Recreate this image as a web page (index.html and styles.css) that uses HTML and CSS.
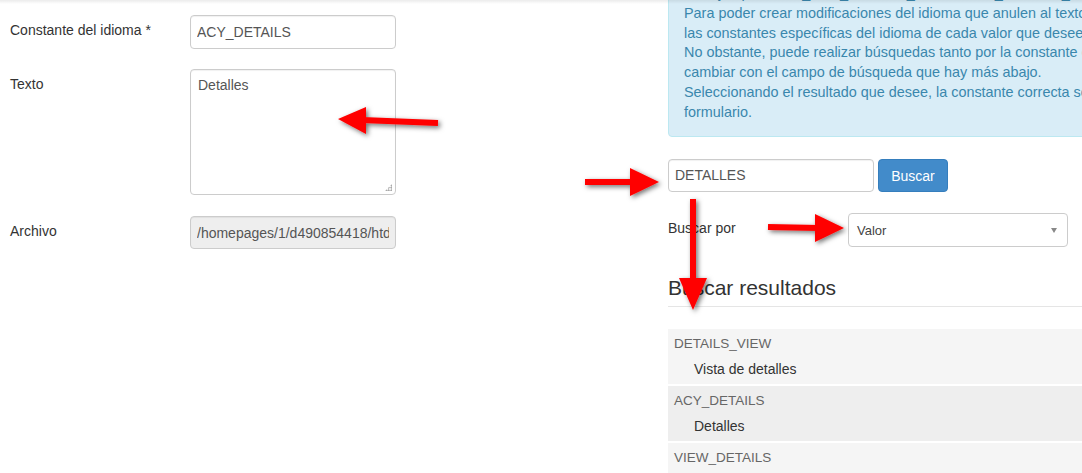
FILE: index.html
```html
<!DOCTYPE html>
<html lang="es">
<head>
  <meta charset="UTF-8">
  <title>Idioma - Modificar constante</title>
  <meta name="viewport" content="width=device-width,initial-scale=1">
  <link rel="stylesheet" href="styles.css">
</head>
<body>

<div class="page">
  <div class="form-col">
    <div class="form-row">
      <label for="constant">Constante del idioma *</label>
      <input id="constant" class="field" value="ACY_DETAILS">
    </div>
    <div class="form-row">
      <label for="text">Texto</label>
      <div class="textarea-wrap">
        <textarea id="text" class="field">Detalles</textarea>
      </div>
    </div>
    <div class="form-row">
      <label for="file">Archivo</label>
      <input id="file" class="field field-short" value="/homepages/1/d490854418/htdocs/language/es-ES/es-ES.com_acymailing.ini" readonly>
    </div>
  </div>

  <div class="side-col">
    <div class="alert">
      Por ejemplo: COM_ACY_DETAILS_EMAIL, ACY_DETAILS_VIEW, ACY_VIEW_DETAILS y ACY_EMAIL_PAGE_QUEUE<br>
      Para poder crear modificaciones del idioma que anulen al texto original, necesita conocer<br>
      las constantes específicas del idioma de cada valor que desee modificar.<br>
      No obstante, puede realizar búsquedas tanto por la constante como por el texto que desee<br>
      cambiar con el campo de búsqueda que hay más abajo.<br>
      Seleccionando el resultado que desee, la constante correcta se insertará en el<br>
      formulario.
    </div>

    <div class="search-row">
      <input class="field search-input" value="DETALLES">
      <button class="btn-primary" type="button">Buscar</button>
    </div>

    <div class="filter-row">
      <span class="filter-label">Buscar por</span>
      <div class="chzn-select">
        <span>Valor</span>
        <b class="chzn-arrow"></b>
      </div>
    </div>

    <h3 class="results-title">Buscar resultados</h3>

    <ul class="results">
      <li>
        <div class="result-key">DETAILS_VIEW</div>
        <div class="result-value">Vista de detalles</div>
      </li>
      <li class="active">
        <div class="result-key">ACY_DETAILS</div>
        <div class="result-value">Detalles</div>
      </li>
      <li>
        <div class="result-key">VIEW_DETAILS</div>
        <div class="result-value">Ver detalles</div>
      </li>
    </ul>
  </div>
</div>

<svg class="arrows" width="1082" height="473" viewBox="0 0 1082 473">
  <defs>
    <filter id="shade" x="-20%" y="-20%" width="140%" height="140%">
      <feDropShadow dx="2" dy="2" stdDeviation="2.5" flood-color="#000" flood-opacity="0.55"/>
    </filter>
  </defs>
  <g fill="#f00" stroke="#f00" filter="url(#shade)">
    <!-- textarea -->
    <line x1="438" y1="123" x2="362" y2="120" stroke-width="6"/>
    <polygon points="338,119 366,107 366,134" stroke="none"/>
    <!-- search field -->
    <line x1="585" y1="182" x2="634" y2="182" stroke-width="6"/>
    <polygon points="659,182 630,168 630,196" stroke="none"/>
    <!-- down to results -->
    <line x1="693" y1="199" x2="693" y2="282" stroke-width="6"/>
    <polygon points="693,310 679,278 707,278" stroke="none"/>
    <!-- select -->
    <line x1="768" y1="227" x2="819" y2="228" stroke-width="6"/>
    <polygon points="844,228 815,214 815,242" stroke="none"/>
  </g>
</svg>

<div class="top-shade"></div>

</body>
</html>
```

FILE: styles.css
```css
html, body {
  margin: 0;
  height: 100%;
  overflow: hidden;
}
body {
  background: #fff;
  color: #333;
  font-family: "Liberation Sans", Arial, sans-serif;
  font-size: 14px;
  line-height: 20px;
}
.page {
  display: flex;
  align-items: flex-start;
}
.form-col {
  width: 658px;
  flex-shrink: 0;
  padding: 15px 0 0 10px;
}
.form-row {
  display: flex;
  align-items: flex-start;
  margin-bottom: 21px;
}
.form-row:first-child {
  margin-bottom: 20px;
}
.form-row label {
  width: 180px;
  margin-top: 5px;
}
.field {
  width: 206px;
  height: 34px;
  padding: 6px;
  margin: 0;
  border: 1px solid #ccc;
  border-radius: 4px;
  box-sizing: border-box;
  box-shadow: inset 0 1px 1px rgba(0,0,0,.06);
  color: #555;
  font: inherit;
  background: #fff;
  outline: none;
}
.field-short {
  height: 33px;
  background: #eee;
  overflow: hidden;
}
.textarea-wrap {
  position: relative;
}
.textarea-wrap textarea {
  display: block;
  height: 126px;
  resize: none;
  padding: 5px 7px;
}
.textarea-wrap::after {
  content: "";
  position: absolute;
  right: 4px;
  bottom: 4px;
  width: 7px;
  height: 7px;
  background: radial-gradient(circle, #999 0.8px, transparent 1px) 0 0 / 2.5px 2.5px;
  clip-path: polygon(100% 0, 100% 100%, 0 100%);
}

.side-col {
  width: 460px;
  flex-shrink: 0;
}
.alert {
  margin-top: -32px;
  padding: 15px 15px 13px;
  background: #d9edf7;
  border: 1px solid #bce8f1;
  border-radius: 4px;
  color: #3a87ad;
  font-size: 14.4px;
  line-height: 19.8px;
  white-space: nowrap;
  overflow: hidden;
}
.search-row {
  display: flex;
  margin-top: 22px;
}
.search-input {
  height: 33px;
  color: #555;
}
.btn-primary {
  margin-left: 4px;
  width: 70px;
  height: 33px;
  padding: 6px 12px;
  background: #428bca;
  border: 1px solid #357ebd;
  border-radius: 4px;
  color: #fff;
  font: inherit;
  cursor: pointer;
}
.filter-row {
  display: flex;
  align-items: flex-start;
  margin-top: 21px;
}
.filter-label {
  width: 180px;
  margin-top: 5px;
}
.chzn-select {
  position: relative;
  width: 220px;
  height: 34px;
  box-sizing: border-box;
  padding: 7px 8px;
  border: 1px solid #ccc;
  border-radius: 4px;
  color: #444;
  font-size: 13px;
  background: #fff;
}
.chzn-arrow {
  position: absolute;
  right: 10px;
  top: 14px;
  border-left: 3.5px solid transparent;
  border-right: 3.5px solid transparent;
  border-top: 5px solid #888;
}
.results-title {
  margin: 29px 0 0;
  padding-bottom: 7px;
  border-bottom: 1px solid #e5e5e5;
  font-size: 21px;
  font-weight: 400;
  line-height: 23px;
}
.results {
  list-style: none;
  margin: 22px 0 0;
  padding: 0;
}
.results li {
  background: #f5f5f5;
  padding: 5px 6px;
  margin-bottom: 2px;
}
.results li.active {
  background: #eee;
}
.result-key {
  color: #666;
  font-size: 13.5px;
}
.result-value {
  margin-top: 5px;
  padding-left: 20px;
  color: #333;
}

.arrows {
  position: absolute;
  top: 0;
  left: 0;
  pointer-events: none;
}
.top-shade {
  position: absolute;
  top: 0;
  left: 0;
  right: 0;
  height: 4px;
  background: linear-gradient(rgba(0,0,0,.08), rgba(0,0,0,0));
  pointer-events: none;
}
```
